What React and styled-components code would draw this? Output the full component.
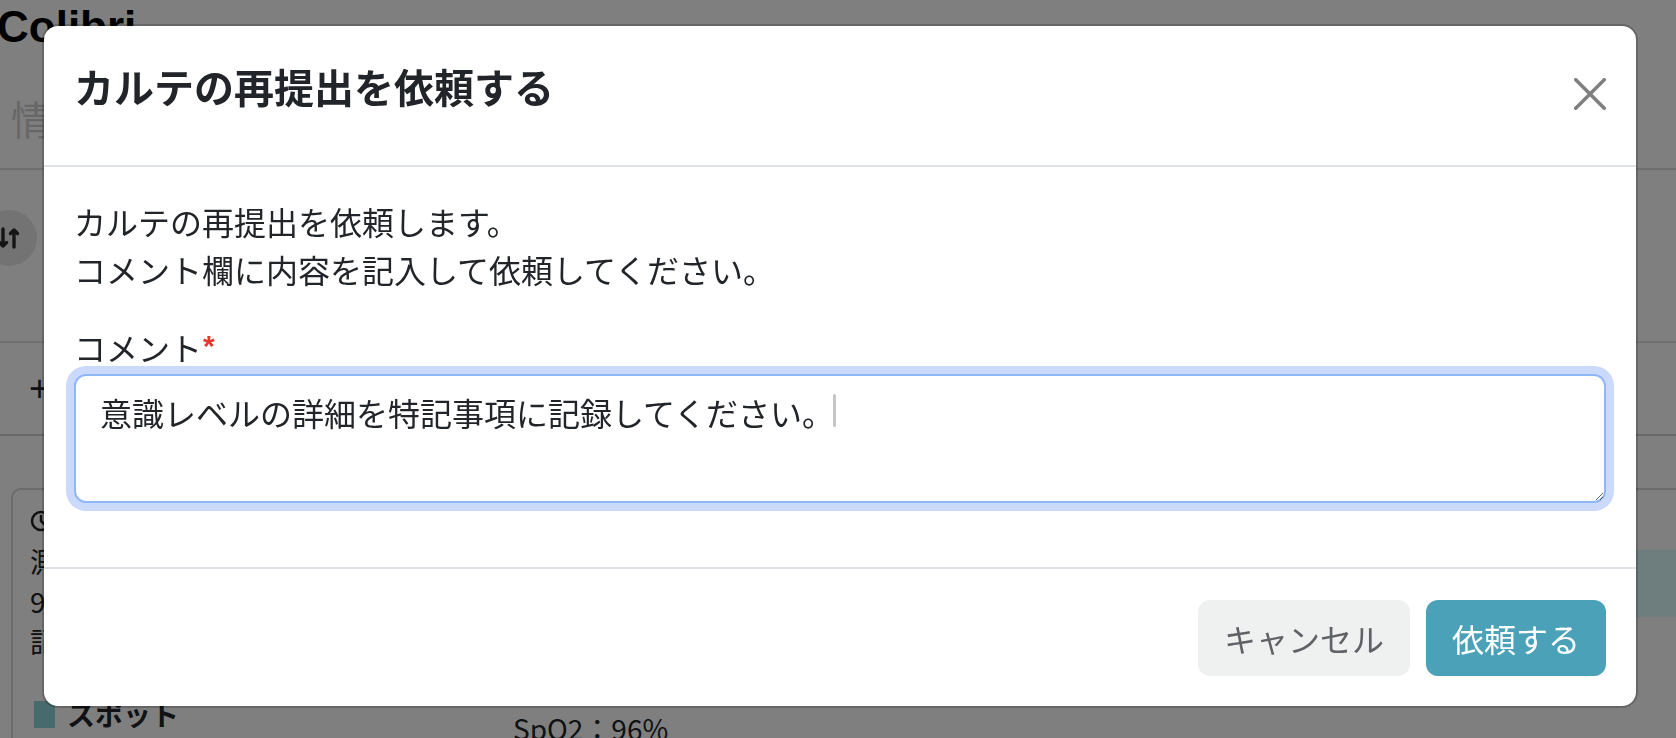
import React from "react";
import styled, { createGlobalStyle } from "styled-components";

const GlobalStyle = createGlobalStyle`
  html, body { margin: 0; padding: 0; }
  body {
    background: #fff;
    font-family: "Noto Sans CJK JP", "Noto Sans", sans-serif;
    color: #212529;
    overflow: hidden;
  }
  *, *::before, *::after { box-sizing: border-box; }
`;

/* ---------- background page ---------- */

const Page = styled.div`
  width: 1676px;
  height: 738px;
  overflow: hidden;
  background: #fff;
`;

const Brand = styled.div`
  font-family: "Liberation Sans", Arial, sans-serif;
  font-weight: 700;
  font-size: 44px;
  line-height: 44px;
  color: #000;
  margin: 5px 0 0 -3px;
`;

const Tabs = styled.nav`
  display: flex;
  gap: 40px;
  padding: 39px 0 20px 11px;
  border-bottom: 2px solid #dedede;
`;

const Tab = styled.span`
  font-size: 40px;
  line-height: 60px;
  color: #cfcfcf;
`;

const Toolbar = styled.div`
  display: flex;
  align-items: flex-start;
  height: 173px;
  padding-top: 40px;
  border-bottom: 2px solid #dedede;
`;

const RoundButton = styled.div`
  width: 56px;
  height: 56px;
  margin-left: -19px;
  border-radius: 50%;
  background: #e6e6e6;
  display: flex;
  align-items: center;
  justify-content: center;
  color: #2a2a2a;
`;

const AddRow = styled.div`
  display: flex;
  align-items: center;
  height: 93px;
  padding-left: 29px;
  border-bottom: 2px solid #d2d2d2;
  font-size: 32px;
  color: #222;
`;

const Plus = styled.span`
  font-family: "Liberation Sans", Arial, sans-serif;
  font-size: 36px;
  margin-right: 6px;
`;

const Card = styled.section`
  display: flex;
  width: 1720px;
  height: 400px;
  margin: 52px 0 0 11px;
  border: 2px solid #d6d6d6;
  border-radius: 10px;
  padding: 11px 0 0 17px;
`;

const CardMain = styled.div`
  flex: 1;
  display: flex;
  flex-direction: column;
`;

const InfoLine = styled.div`
  display: flex;
  align-items: center;
  gap: 8px;
  font-size: 28px;
  line-height: 40px;
  color: #222;
`;

const SideBlock = styled.div`
  width: 220px;
  height: 67px;
  margin: 49px 40px 0 0;
  background: #dcfbfc;
  border-radius: 6px;
`;

const Section = styled.div`
  display: flex;
  align-items: flex-start;
  margin-top: 7px;
`;

const SectionHead = styled.div`
  flex: 0 0 483px;
  display: flex;
  align-items: center;
  gap: 12px;
  margin-top: 26px;
  padding-left: 4px;
  font-size: 28px;
  line-height: 40px;
  font-weight: 700;
  color: #212529;
`;

const Marker = styled.span`
  width: 21px;
  height: 27px;
  background: #8fd6da;
`;

const Values = styled.div`
  display: flex;
  flex-direction: column;
  font-size: 28px;
  line-height: 40px;
  color: #212529;
`;

/* ---------- modal ---------- */

const Overlay = styled.div`
  position: fixed;
  inset: 0;
  background: rgba(0, 0, 0, 0.5);
`;

const Dialog = styled.div`
  width: 1596px;
  margin: 24px 0 0 42px;
  background: #fff;
  border: 2px solid rgba(0, 0, 0, 0.2);
  border-radius: 16px;
  background-clip: padding-box;
`;

const Header = styled.header`
  display: flex;
  align-items: flex-start;
  justify-content: space-between;
  padding: 30px 30px 49px;
  border-bottom: 2px solid #dee2e6;
`;

const Title = styled.h5`
  margin: 0;
  font-size: 40px;
  line-height: 60px;
  font-weight: 700;
  color: #212529;
`;

const CloseButton = styled.button`
  width: 32px;
  height: 32px;
  margin-top: 22px;
  padding: 0;
  border: none;
  background: none;
  cursor: pointer;
  display: flex;
`;

const Body = styled.div`
  padding: 30px 30px 32px;
`;

const Message = styled.p`
  margin: 0 0 30px;
  font-size: 32px;
  line-height: 48px;
  color: #212529;
`;

const Label = styled.label`
  display: block;
  margin-bottom: 3px;
  font-size: 32px;
  line-height: 48px;
  color: #212529;
`;

const Required = styled.span`
  font-family: "Liberation Sans", Arial, sans-serif;
  font-weight: 700;
  font-size: 30px;
  line-height: 1;
  vertical-align: 5px;
  color: #e5392e;
  margin-left: 1px;
`;

const Field = styled.div`
  position: relative;
  margin-bottom: 32px;
`;

const TextArea = styled.textarea`
  display: block;
  width: 100%;
  height: 129px;
  padding: 12px 24px;
  font-family: "Noto Sans CJK JP", "Noto Sans", sans-serif;
  font-size: 32px;
  line-height: 48px;
  color: #212529;
  background: #fff;
  border: 2px solid #8fb6f7;
  border-radius: 12px;
  box-shadow: 0 0 0 8px #cbdafb;
  outline: none;
  resize: vertical;
`;

const Caret = styled.span`
  position: absolute;
  left: 759px;
  top: 20px;
  width: 3px;
  height: 33px;
  border-radius: 2px;
  background: #c6c6c6;
`;

const Footer = styled.footer`
  display: flex;
  justify-content: flex-end;
  gap: 16px;
  padding: 31px 30px 30px;
  border-top: 2px solid #dee2e6;
`;

const Button = styled.button`
  height: 76px;
  padding: 0 26px;
  border: none;
  border-radius: 12px;
  font-family: "Noto Sans CJK JP", "Noto Sans", sans-serif;
  font-size: 32px;
  line-height: 48px;
  cursor: pointer;
  background: ${(p) => (p.$primary ? "#4ba2b8" : "#eff0f0")};
  color: ${(p) => (p.$primary ? "#fff" : "#5f6266")};
`;

const SortIcon = () => (
  <svg width="22" height="22" viewBox="0 0 22 22" fill="none" stroke="currentColor" strokeWidth="3.4" strokeLinecap="round" strokeLinejoin="round">
    <path d="M5 2v17M1.5 15.5 5 19l3.5-3.5" />
    <path d="M16 20V3M12.5 6.5 16 3l3.5 3.5" />
  </svg>
);

const ClockIcon = () => (
  <svg width="22" height="22" viewBox="0 0 22 22" fill="none" stroke="currentColor" strokeWidth="2.5">
    <circle cx="11" cy="11" r="9" />
    <path d="M11 6v5l3 3" strokeLinecap="round" />
  </svg>
);

const XIcon = () => (
  <svg width="32" height="32" viewBox="0 0 32 32" fill="none" stroke="#000" strokeOpacity="0.5" strokeWidth="3.5" strokeLinecap="round">
    <path d="M1.75 1.75 30.25 30.25M30.25 1.75 1.75 30.25" />
  </svg>
);

export default function App() {
  return (
    <>
      <GlobalStyle />
      <Page>
        <Brand>Colibri</Brand>
        <Tabs>
          <Tab>情報</Tab>
        </Tabs>
        <Toolbar>
          <RoundButton>
            <SortIcon />
          </RoundButton>
        </Toolbar>
        <AddRow>
          <Plus>+</Plus>サマリー追加
        </AddRow>
        <Card>
          <CardMain>
            <InfoLine>
              <ClockIcon />
              10:00
            </InfoLine>
            <InfoLine>測定者：看護師</InfoLine>
            <InfoLine>9/12 10:00</InfoLine>
            <InfoLine>記録者：山田</InfoLine>
            <Section>
              <SectionHead>
                <Marker />
                スポット
              </SectionHead>
              <Values>
                <span>血圧：118/76</span>
                <span>SpO2：96%</span>
              </Values>
            </Section>
          </CardMain>
          <SideBlock />
        </Card>
      </Page>

      <Overlay>
        <Dialog role="dialog" aria-modal="true">
          <Header>
            <Title>カルテの再提出を依頼する</Title>
            <CloseButton aria-label="閉じる">
              <XIcon />
            </CloseButton>
          </Header>
          <Body>
            <Message>
              カルテの再提出を依頼します。
              <br />
              コメント欄に内容を記入して依頼してください。
            </Message>
            <Label htmlFor="comment">
              コメント<Required>*</Required>
            </Label>
            <Field>
              <TextArea id="comment" defaultValue="意識レベルの詳細を特記事項に記録してください。" />
              <Caret />
            </Field>
          </Body>
          <Footer>
            <Button>キャンセル</Button>
            <Button $primary>依頼する</Button>
          </Footer>
        </Dialog>
      </Overlay>
    </>
  );
}
